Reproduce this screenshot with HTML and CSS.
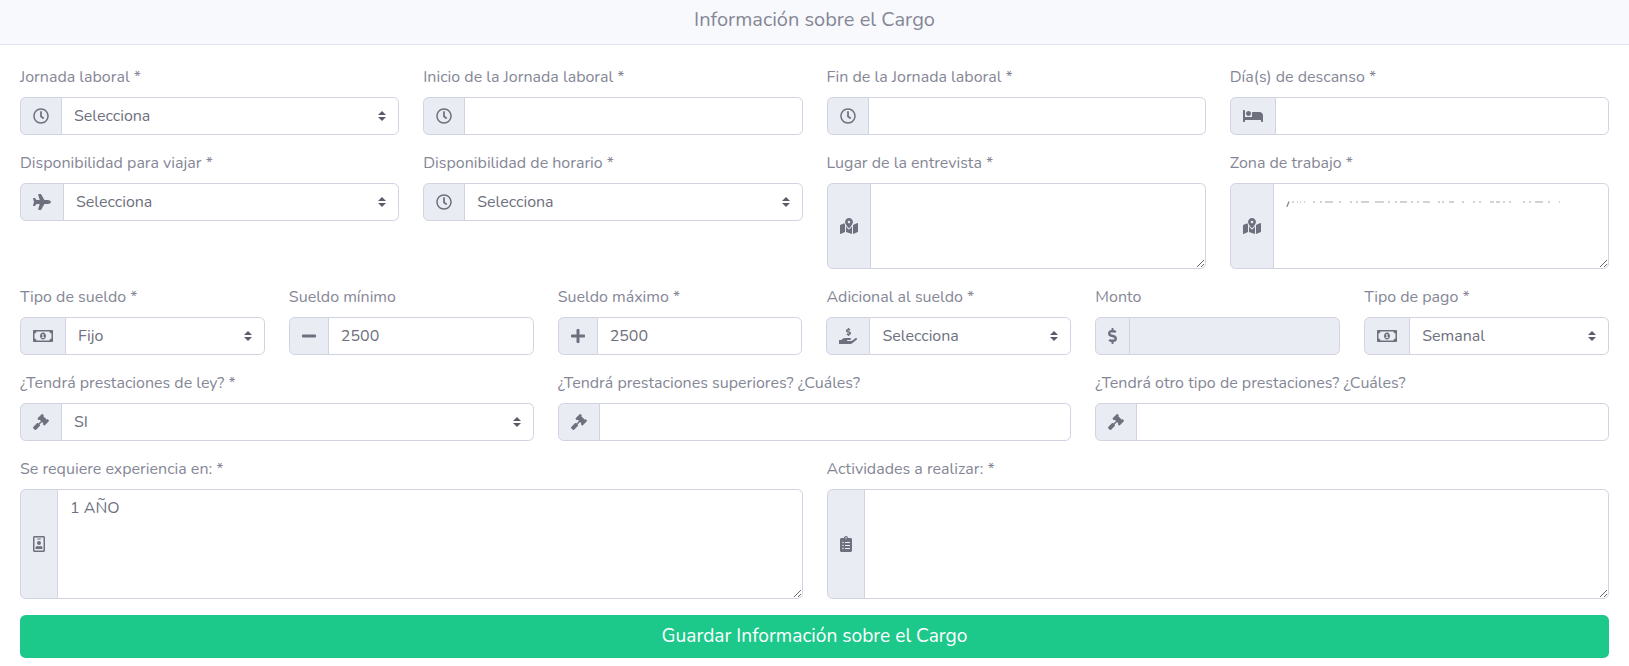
FILE: index.html
```html
<!DOCTYPE html>
<html lang="es">
<head>
<meta charset="utf-8">
<title>Información sobre el Cargo</title>
<link rel="stylesheet" href="styles.css">
</head>
<body>
<svg class="sprite" aria-hidden="true">
  <symbol id="clock" viewBox="0 0 512 512"><path d="M256 8C119 8 8 119 8 256s111 248 248 248 248-111 248-248S393 8 256 8zm0 448c-110.5 0-200-89.5-200-200S145.5 56 256 56s200 89.5 200 200-89.5 200-200 200zm61.8-104.4l-84.9-61.7c-3.1-2.3-4.9-5.9-4.9-9.7V116c0-6.6 5.4-12 12-12h32c6.6 0 12 5.4 12 12v141.7l66.8 48.6c5.4 3.9 6.5 11.4 2.6 16.8L334.6 349c-3.9 5.3-11.4 6.5-16.8 2.6z"/></symbol>
  <symbol id="plane" viewBox="0 0 576 512"><path d="M480 192H365.71L260.61 8.06A16.014 16.014 0 0 0 246.71 0h-65.5c-10.63 0-18.3 10.17-15.38 20.39L214.86 192H112l-43.2-57.6c-3.02-4.03-7.77-6.4-12.8-6.4H16.01C5.6 128-2.04 137.78.49 147.88L32 256 .49 364.12C-2.04 374.22 5.6 384 16.01 384H56c5.04 0 9.78-2.37 12.8-6.4L112 320h102.86l-49.03 171.6c-2.92 10.22 4.75 20.4 15.38 20.4h65.5c5.74 0 11.04-3.08 13.89-8.06L365.71 320H480c35.35 0 96-28.65 96-64s-60.65-64-96-64z"/></symbol>
  <symbol id="bed" viewBox="0 0 640 512"><path d="M176 256c44.11 0 80-35.89 80-80s-35.89-80-80-80-80 35.89-80 80 35.89 80 80 80zm352-128H304c-8.84 0-16 7.16-16 16v144H64V80c0-8.84-7.16-16-16-16H16C7.16 64 0 71.16 0 80v352c0 8.84 7.16 16 16 16h32c8.84 0 16-7.16 16-16v-48h512v48c0 8.84 7.16 16 16 16h32c8.84 0 16-7.16 16-16V240c0-61.86-50.14-112-112-112z"/></symbol>
  <symbol id="map" viewBox="0 0 576 512"><path d="M288 0c-69.59 0-126 56.41-126 126 0 56.26 82.35 158.8 113.9 196.02 6.39 7.54 17.82 7.54 24.2 0C331.65 284.8 414 182.26 414 126 414 56.41 357.59 0 288 0zm0 168c-23.2 0-42-18.8-42-42s18.8-42 42-42 42 18.8 42 42-18.8 42-42 42zM20.12 215.95A32.006 32.006 0 0 0 0 245.66v250.32c0 11.32 11.43 19.06 21.94 14.86L160 448V214.92c-8.84-15.98-16.07-31.54-21.25-46.42L20.12 215.95zM288 359.67c-14.07 0-27.38-6.18-36.51-16.96-19.66-23.2-40.57-49.62-59.49-76.72v182l192 64V266c-18.92 27.09-39.82 53.52-59.49 76.72-9.13 10.77-22.44 16.95-36.51 16.95zm266.06-198.51L416 224v288l139.88-55.95A31.996 31.996 0 0 0 576 426.34V176.02c0-11.32-11.43-19.06-21.94-14.86z"/></symbol>
  <symbol id="bill" viewBox="0 0 640 512"><path d="M320 144c-53.02 0-96 50.14-96 112 0 61.85 42.98 112 96 112 53 0 96-50.13 96-112 0-61.86-42.98-112-96-112zm40 168c0 4.42-3.58 8-8 8h-64c-4.42 0-8-3.58-8-8v-16c0-4.42 3.58-8 8-8h16v-55.44l-.47.31a7.992 7.992 0 0 1-11.09-2.22l-8.88-13.31a7.992 7.992 0 0 1 2.22-11.09l15.33-10.22a23.99 23.99 0 0 1 13.31-4.03H328c4.42 0 8 3.58 8 8v88h16c4.42 0 8 3.58 8 8v16zM608 64H32C14.33 64 0 78.33 0 96v320c0 17.67 14.33 32 32 32h576c17.67 0 32-14.33 32-32V96c0-17.67-14.33-32-32-32zm-16 272c-35.35 0-64 28.65-64 64H112c0-35.35-28.65-64-64-64V176c35.35 0 64-28.65 64-64h416c0 35.35 28.65 64 64 64v160z"/></symbol>
  <symbol id="minus" viewBox="0 0 448 512"><path d="M416 208H32c-17.67 0-32 14.33-32 32v32c0 17.67 14.33 32 32 32h384c17.67 0 32-14.33 32-32v-32c0-17.67-14.33-32-32-32z"/></symbol>
  <symbol id="plus" viewBox="0 0 448 512"><path d="M416 208H272V64c0-17.67-14.33-32-32-32h-32c-17.67 0-32 14.33-32 32v144H32c-17.67 0-32 14.33-32 32v32c0 17.67 14.33 32 32 32h144v144c0 17.67 14.33 32 32 32h32c17.67 0 32-14.33 32-32V304h144c17.67 0 32-14.33 32-32v-32c0-17.67-14.33-32-32-32z"/></symbol>
  <symbol id="hand" viewBox="0 0 576 512"><path d="M271.06,144.3l54.27,14.3a8.59,8.59,0,0,1,6.63,8.1c0,4.6-4.09,8.4-9.12,8.4h-35.6a30,30,0,0,1-11.19-2.2c-5.24-2.2-11.28-1.7-15.3,2l-19,17.5a11.68,11.68,0,0,0-2.25,2.66,11.42,11.42,0,0,0,3.88,15.74,83.77,83.77,0,0,0,34.51,11.5V240c0,8.8,7.83,16,17.37,16h17.37c9.55,0,17.38-7.2,17.38-16V222.4c32.93-3.6,57.84-31,53.5-63-3.15-23-22.46-41.3-46.56-47.7L282.68,97.4a8.59,8.59,0,0,1-6.63-8.1c0-4.6,4.09-8.4,9.12-8.4h35.6A30,30,0,0,1,332,83.1c5.23,2.2,11.28,1.7,15.3-2l19-17.5A11.31,11.31,0,0,0,368.47,61a11.43,11.43,0,0,0-3.84-15.78,83.82,83.82,0,0,0-34.52-11.5V16c0-8.8-7.82-16-17.37-16H295.37C285.82,0,278,7.2,278,16V33.6c-32.89,3.6-57.85,31-53.51,63C227.63,119.6,247,137.9,271.06,144.3ZM565.27,328.1c-11.8-10.7-30.2-10-42.6,0L430.27,402a63.64,63.64,0,0,1-40,14H272a16,16,0,0,1,0-32h78.29c15.9,0,30.71-10.9,33.25-26.6a31.2,31.2,0,0,0,.46-5.46A32,32,0,0,0,352,320H192a117.66,117.66,0,0,0-74.1,26.29L71.4,384H16A16,16,0,0,0,0,400v96a16,16,0,0,0,16,16H372.77a64,64,0,0,0,40-14L564,377a32,32,0,0,0,1.28-48.9Z"/></symbol>
  <symbol id="dollar" viewBox="0 0 288 512"><path d="M209.2 233.4l-108-31.6C88.7 198.2 80 186.5 80 173.5c0-16.3 13.2-29.5 29.5-29.5h66.3c12.2 0 24.2 3.7 34.2 10.5 6.1 4.1 14.3 3.1 19.5-2l34.8-34c7.1-6.9 6.1-18.4-1.8-24.5C238 74.8 207.4 64.1 176 64V16c0-8.8-7.2-16-16-16h-32c-8.8 0-16 7.2-16 16v48h-2.5C45.8 64-5.4 118.7.5 183.6c4.2 46.1 39.4 83.6 83.8 96.6l102.5 30c12.5 3.7 21.2 15.3 21.2 28.3 0 16.3-13.2 29.5-29.5 29.5h-66.3C100 368 88 364.3 78 357.5c-6.1-4.1-14.3-3.1-19.5 2l-34.8 34c-7.1 6.9-6.1 18.4 1.8 24.5 24.5 19.2 55.1 29.9 86.5 30v48c0 8.8 7.2 16 16 16h32c8.8 0 16-7.2 16-16v-48.2c46.6-.9 90.3-28.6 105.7-72.7 21.5-61.6-14.6-124.8-72.5-141.7z"/></symbol>
  <symbol id="gavel" viewBox="0 0 512 512"><path d="M504.971 199.362l-22.627-22.627c-9.373-9.373-24.569-9.373-33.941 0l-5.657 5.657L329.608 69.255l5.657-5.657c9.373-9.373 9.373-24.569 0-33.941L312.638 7.029c-9.373-9.373-24.569-9.373-33.941 0L154.246 131.48c-9.373 9.373-9.373 24.569 0 33.941l22.627 22.627c9.373 9.373 24.569 9.373 33.941 0l5.657-5.657 39.598 39.598-81.04 81.04-5.657-5.657c-12.497-12.497-32.758-12.497-45.255 0L9.373 412.118c-12.497 12.497-12.497 32.758 0 45.255l45.255 45.255c12.497 12.497 32.758 12.497 45.255 0l114.745-114.745c12.497-12.497 12.497-32.758 0-45.255l-5.657-5.657 81.04-81.04 39.598 39.598-5.657 5.657c-9.373 9.373-9.373 24.569 0 33.941l22.627 22.627c9.373 9.373 24.569 9.373 33.941 0l124.451-124.451c9.372-9.372 9.372-24.568 0-33.941z"/></symbol>
  <symbol id="badge" viewBox="0 0 384 512"><path d="M336 0H48C21.5 0 0 21.5 0 48v416c0 26.5 21.5 48 48 48h288c26.5 0 48-21.5 48-48V48c0-26.5-21.5-48-48-48zm0 464H48V48h288v416zM144 112h96c8.8 0 16-7.2 16-16s-7.2-16-16-16h-96c-8.8 0-16 7.2-16 16s7.2 16 16 16zm48 176c35.3 0 64-28.7 64-64s-28.7-64-64-64-64 28.7-64 64 28.7 64 64 64zm-89.6 128h179.2c12.4 0 22.4-8.6 22.4-19.2v-19.2c0-31.8-30.1-57.6-67.2-57.6-10.8 0-18.7 8-44.8 8-26.9 0-33.4-8-44.8-8-37.1 0-67.2 25.8-67.2 57.6v19.2c0 10.6 10 19.2 22.4 19.2z"/></symbol>
  <symbol id="list" viewBox="0 0 384 512"><path d="M336 64h-80c0-35.3-28.7-64-64-64s-64 28.7-64 64H48C21.5 64 0 85.5 0 112v352c0 26.5 21.5 48 48 48h288c26.5 0 48-21.5 48-48V112c0-26.5-21.5-48-48-48zM96 424c-13.3 0-24-10.7-24-24s10.7-24 24-24 24 10.7 24 24-10.7 24-24 24zm0-96c-13.3 0-24-10.7-24-24s10.7-24 24-24 24 10.7 24 24-10.7 24-24 24zm0-96c-13.3 0-24-10.7-24-24s10.7-24 24-24 24 10.7 24 24-10.7 24-24 24zm96-192c13.3 0 24 10.7 24 24s-10.7 24-24 24-24-10.7-24-24 10.7-24 24-24zm128 368c0 4.4-3.6 8-8 8H168c-4.4 0-8-3.6-8-8v-16c0-4.4 3.6-8 8-8h144c4.4 0 8 3.6 8 8v16zm0-96c0 4.4-3.6 8-8 8H168c-4.4 0-8-3.6-8-8v-16c0-4.4 3.6-8 8-8h144c4.4 0 8 3.6 8 8v16zm0-96c0 4.4-3.6 8-8 8H168c-4.4 0-8-3.6-8-8v-16c0-4.4 3.6-8 8-8h144c4.4 0 8 3.6 8 8v16z"/></symbol>
</svg>
<header class="card-header"><span>Información sobre el Cargo</span></header>
<form class="card-body">
  <div class="row cols-4">
    <div class="group"><label>Jornada laboral *</label><div class="field"><span class="addon"><svg class="icon w16"><use href="#clock"/></svg></span><select class="control select"><option>Selecciona</option></select></div></div>
    <div class="group"><label>Inicio de la Jornada laboral *</label><div class="field"><span class="addon"><svg class="icon w16"><use href="#clock"/></svg></span><input class="control"></div></div>
    <div class="group"><label>Fin de la Jornada laboral *</label><div class="field"><span class="addon"><svg class="icon w16"><use href="#clock"/></svg></span><input class="control"></div></div>
    <div class="group"><label>Día(s) de descanso *</label><div class="field"><span class="addon"><svg class="icon w20"><use href="#bed"/></svg></span><input class="control"></div></div>
  </div>
  <div class="row cols-4">
    <div class="group"><label>Disponibilidad para viajar *</label><div class="field"><span class="addon"><svg class="icon w18"><use href="#plane"/></svg></span><select class="control select"><option>Selecciona</option></select></div></div>
    <div class="group"><label>Disponibilidad de horario *</label><div class="field"><span class="addon"><svg class="icon w16"><use href="#clock"/></svg></span><select class="control select"><option>Selecciona</option></select></div></div>
    <div class="group"><label>Lugar de la entrevista *</label><div class="field"><span class="addon"><svg class="icon w18"><use href="#map"/></svg></span><textarea class="control area-3"></textarea></div></div>
    <div class="group"><label>Zona de trabajo *</label><div class="field"><span class="addon"><svg class="icon w18"><use href="#map"/></svg></span><textarea class="control area-3"></textarea>
      <svg class="redacted" viewBox="0 0 274 8" aria-hidden="true">
        <path class="remnant-slash" d="M.9 5.8L3 .6"/>
        <path class="remnant" d="M6 1h2m3 0h1m2 0h1m3 0h1m8 0h2m5 0h2m3 0h8m6 0h2m9 0h2m4 0h2m3 0h8m6 0h9m4 0h2m5 0h2m3 0h7m4 0h2m4 0h2m4 0h7m8 0h2m2 0h2m5 0h5m8 0h2m9 0h2m4 0h2m9 0h4m2 0h4m3 0h2m4 0h2m12 0h2m4 0h2m4 0h8m5 0h2m9 0h2m7 0h2m7 0h2m4 0h2"/>
      </svg></div></div>
  </div>
  <div class="row cols-6">
    <div class="group"><label>Tipo de sueldo *</label><div class="field"><span class="addon"><svg class="icon w20"><use href="#bill"/></svg></span><select class="control select"><option>Fijo</option></select></div></div>
    <div class="group"><label>Sueldo mínimo</label><div class="field"><span class="addon"><svg class="icon w14"><use href="#minus"/></svg></span><input class="control" value="2500"></div></div>
    <div class="group"><label>Sueldo máximo *</label><div class="field"><span class="addon"><svg class="icon w14"><use href="#plus"/></svg></span><input class="control" value="2500"></div></div>
    <div class="group"><label>Adicional al sueldo *</label><div class="field"><span class="addon"><svg class="icon w18"><use href="#hand"/></svg></span><select class="control select"><option>Selecciona</option></select></div></div>
    <div class="group"><label>Monto</label><div class="field"><span class="addon"><svg class="icon w9"><use href="#dollar"/></svg></span><input class="control" disabled></div></div>
    <div class="group"><label>Tipo de pago *</label><div class="field"><span class="addon"><svg class="icon w20"><use href="#bill"/></svg></span><select class="control select"><option>Semanal</option></select></div></div>
  </div>
  <div class="row cols-3">
    <div class="group"><label>¿Tendrá prestaciones de ley? *</label><div class="field"><span class="addon"><svg class="icon w16"><use href="#gavel"/></svg></span><select class="control select"><option>SI</option></select></div></div>
    <div class="group"><label>¿Tendrá prestaciones superiores? ¿Cuáles?</label><div class="field"><span class="addon"><svg class="icon w16"><use href="#gavel"/></svg></span><input class="control"></div></div>
    <div class="group"><label>¿Tendrá otro tipo de prestaciones? ¿Cuáles?</label><div class="field"><span class="addon"><svg class="icon w16"><use href="#gavel"/></svg></span><input class="control"></div></div>
  </div>
  <div class="row cols-2">
    <div class="group"><label>Se requiere experiencia en: *</label><div class="field"><span class="addon"><svg class="icon w12"><use href="#badge"/></svg></span><textarea class="control area-4">1 AÑO</textarea></div></div>
    <div class="group"><label>Actividades a realizar: *</label><div class="field"><span class="addon"><svg class="icon w12"><use href="#list"/></svg></span><textarea class="control area-4"></textarea></div></div>
  </div>
  <button class="save" type="button">Guardar Información sobre el Cargo</button>
</form>
</body>
</html>
```
FILE: styles.css
```css
*, *::before, *::after { box-sizing: border-box; }
body {
  margin: 0;
  background: #fff;
  color: #858796;
  font: 400 16px/24px Nunito, Lato, sans-serif;
  overflow: hidden;
}
.sprite { display: none; }
.card-header {
  display: flex;
  justify-content: center;
  height: 45px;
  padding-top: 5px;
  background: #f8f9fc;
  border-bottom: 1px solid #e3e6f0;
  font-size: 20px;
  line-height: 30px;
}
.card-body {
  display: flex;
  flex-direction: column;
  gap: 16px;
  padding: 20px 20px 8px;
}
.row { display: grid; gap: 24px; align-items: start; }
.cols-2 { grid-template-columns: repeat(2, minmax(0, 1fr)); }
.cols-3 { grid-template-columns: repeat(3, minmax(0, 1fr)); }
.cols-4 { grid-template-columns: repeat(4, minmax(0, 1fr)); }
.cols-6 { grid-template-columns: repeat(6, minmax(0, 1fr)); }
.group { display: flex; flex-direction: column; gap: 8px; }
.group label { white-space: nowrap; }
.field { position: relative; display: flex; align-items: stretch; }
.addon {
  display: flex;
  align-items: center;
  padding: 0 12px;
  background: #eaecf4;
  border: 1px solid #d1d3e2;
  border-radius: 5.6px 0 0 5.6px;
  color: #6e707e;
}
.icon { display: block; height: 16px; fill: currentColor; }
.w9 { width: 9px; }
.w12 { width: 12px; }
.w14 { width: 14px; }
.w16 { width: 16px; }
.w18 { width: 18px; }
.w20 { width: 20px; }
.control {
  flex: 1 1 0;
  min-width: 0;
  height: 38px;
  margin: 0 0 0 -1px;
  padding: 6px 12px;
  background: #fff;
  border: 1px solid #d1d3e2;
  border-radius: 0 5.6px 5.6px 0;
  color: #6e707e;
  font: inherit;
  outline: 0;
}
.control:disabled { background: #eaecf4; }
.select {
  appearance: none;
  background: #fff url("data:image/svg+xml,%3csvg xmlns='http://www.w3.org/2000/svg' width='4' height='5' viewBox='0 0 4 5'%3e%3cpath fill='%235a5c69' d='M2 0L0 2h4zm0 5L0 3h4z'/%3e%3c/svg%3e") right 12px center / 8px 10px no-repeat;
}
.area-3 { height: 86px; resize: vertical; }
.area-4 { height: 110px; resize: vertical; }
/* Thin remnants of the erased address, over the text area */
.redacted {
  position: absolute;
  left: 56px;
  top: 18px;
  width: 274px;
  height: 8px;
  fill: none;
  pointer-events: none;
}
.remnant { stroke: #c3c4cb; stroke-width: 1.6; }
.remnant-slash { stroke: #85868f; stroke-width: 1.3; }
.save {
  height: 43px;
  padding: 0 0 2px;
  background: #1cc88a;
  border: 0;
  border-radius: 5.6px;
  color: #fff;
  font: inherit;
  font-size: 19.2px;
}
```
